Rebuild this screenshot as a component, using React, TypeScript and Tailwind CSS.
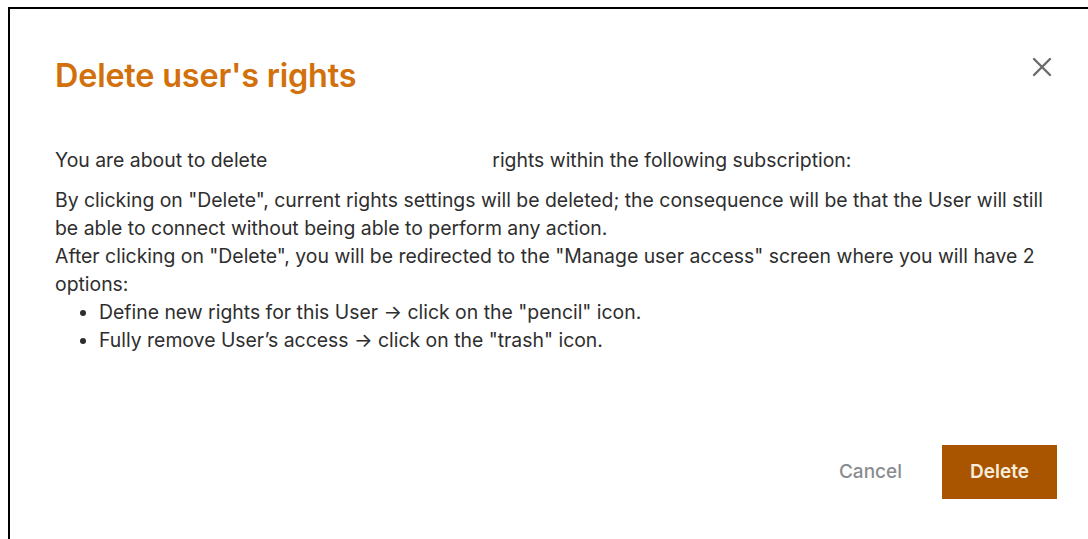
import React from 'react';

// Confirmation dialog shown before a user's rights are removed
const CloseIcon = () => (
  <svg width="20" height="20" viewBox="0 0 20 20" fill="none" stroke="#6b6b6b" strokeWidth="2.4" strokeLinecap="round">
    <path d="M2 2 L18 18 M18 2 L2 18" />
  </svg>
);

export default function App() {
  return (
    <div className="h-[539px] w-[1088px] overflow-hidden bg-white pl-[8px] pt-[7px] font-['Inter','Liberation_Sans',sans-serif]">
      <div className="h-[540px] border-l-2 border-t-2 border-black pl-[45px] pr-[31px]">
        {/* Header */}
        <div className="flex items-center justify-between pt-[49px]">
          <h1 className="text-[32.4px] font-semibold leading-[36px] tracking-[-0.2px] text-[#d2700c]">Delete user's rights</h1>
          <button className="mr-[5px] mt-[-18px]">
            <CloseIcon />
          </button>
        </div>

        {/* Body */}
        <div className="mt-[52px] text-[19.4px] leading-[28px] text-[#2e2e2e]">
          <p>
            You are about to delete <span className="inline-block w-[214px]" /> rights within the following subscription:
          </p>
          <p className="mt-[12px]">
            By clicking on "Delete", current rights settings will be deleted; the consequence will be that the User will still be able to connect without being able to perform any action.
          </p>
          <p>
            After clicking on "Delete", you will be redirected to the "Manage user access" screen where you will have 2 options:
          </p>
          <ul className="list-disc pl-[44px]">
            <li>Define new rights for this User → click on the "pencil" icon.</li>
            <li>Fully remove User’s access → click on the "trash" icon.</li>
          </ul>
        </div>

        {/* Footer */}
        <div className="mt-[91px] flex items-center justify-end gap-[40px]">
          <button className="text-[19px] font-medium text-[#8a8d90]">Cancel</button>
          <button className="h-[54px] w-[115px] bg-[#a95500] text-[19px] font-semibold text-[#f7ecdc]">Delete</button>
        </div>
      </div>
    </div>
  );
}
